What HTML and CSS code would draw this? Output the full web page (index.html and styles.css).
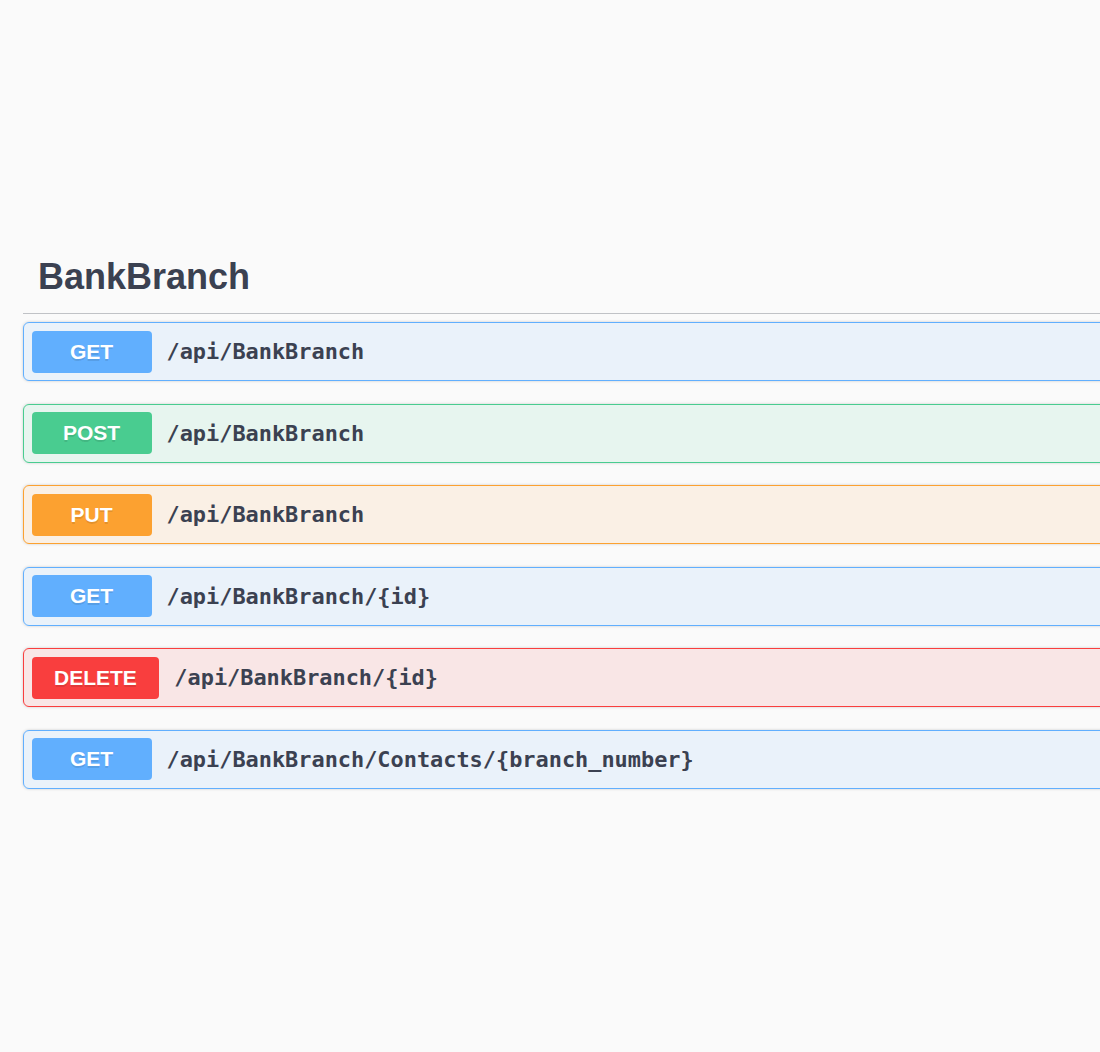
FILE: index.html
```html
<!DOCTYPE html>
<html>
<head>
<meta charset="utf-8">
<title>BankBranch</title>
<link rel="stylesheet" href="styles.css">
</head>
<body>
<div class="wrapper">
  <section class="tag-section">
    <h4 class="opblock-tag"><span>BankBranch</span></h4>
    <div class="opblock get">
      <span class="method">GET</span>
      <span class="path">/api/BankBranch</span>
    </div>
    <div class="opblock post">
      <span class="method">POST</span>
      <span class="path">/api/BankBranch</span>
    </div>
    <div class="opblock put">
      <span class="method">PUT</span>
      <span class="path">/api/BankBranch</span>
    </div>
    <div class="opblock get">
      <span class="method">GET</span>
      <span class="path">/api/BankBranch/{id}</span>
    </div>
    <div class="opblock delete">
      <span class="method">DELETE</span>
      <span class="path">/api/BankBranch/{id}</span>
    </div>
    <div class="opblock get">
      <span class="method">GET</span>
      <span class="path">/api/BankBranch/Contacts/{branch_number}</span>
    </div>
  </section>
</div>
</body>
</html>
```
FILE: styles.css
```css
html, body {
  margin: 0;
  padding: 0;
  background: #fafafa;
  overflow: hidden;
}

body {
  font-family: "Liberation Sans", Arial, sans-serif;
  color: #3b4151;
}

.wrapper {
  padding: 242px 0 0 23px;
  width: 1250px;
}

.opblock-tag {
  margin: 0 0 8px 0;
  padding: 15px 30px 16px 15px;
  font-size: 36px;
  line-height: 40px;
  font-weight: 700;
  color: #3b4151;
  border-bottom: 1px solid rgba(59, 65, 81, 0.3);
}

.opblock {
  display: flex;
  align-items: center;
  padding: 7.5px;
  margin-bottom: 22.5px;
  border: 1px solid;
  border-radius: 6px;
  box-shadow: 0 0 3px rgba(0, 0, 0, 0.19);
}

.method {
  box-sizing: border-box;
  min-width: 120px;
  padding: 9px 22.5px;
  line-height: 24px;
  text-align: center;
  border-radius: 4px;
  font-family: "Liberation Sans", Arial, sans-serif;
  font-size: 21px;
  font-weight: 700;
  color: #fff;
  text-shadow: 0 1.5px 0 rgba(0, 0, 0, 0.1);
}

.path {
  margin-left: 15px;
  font-family: "DejaVu Sans Mono", "Liberation Mono", monospace;
  font-size: 21.9px;
  font-weight: 700;
  color: #3b4151;
}

.get { background: rgba(97, 175, 254, 0.1); border-color: #61affe; }
.get .method { background: #61affe; }

.post { background: rgba(73, 204, 144, 0.1); border-color: #49cc90; }
.post .method { background: #49cc90; }

.put { background: rgba(252, 161, 48, 0.1); border-color: #fca130; }
.put .method { background: #fca130; }

.delete { background: rgba(249, 62, 62, 0.1); border-color: #f93e3e; }
.delete .method { background: #f93e3e; }
```
